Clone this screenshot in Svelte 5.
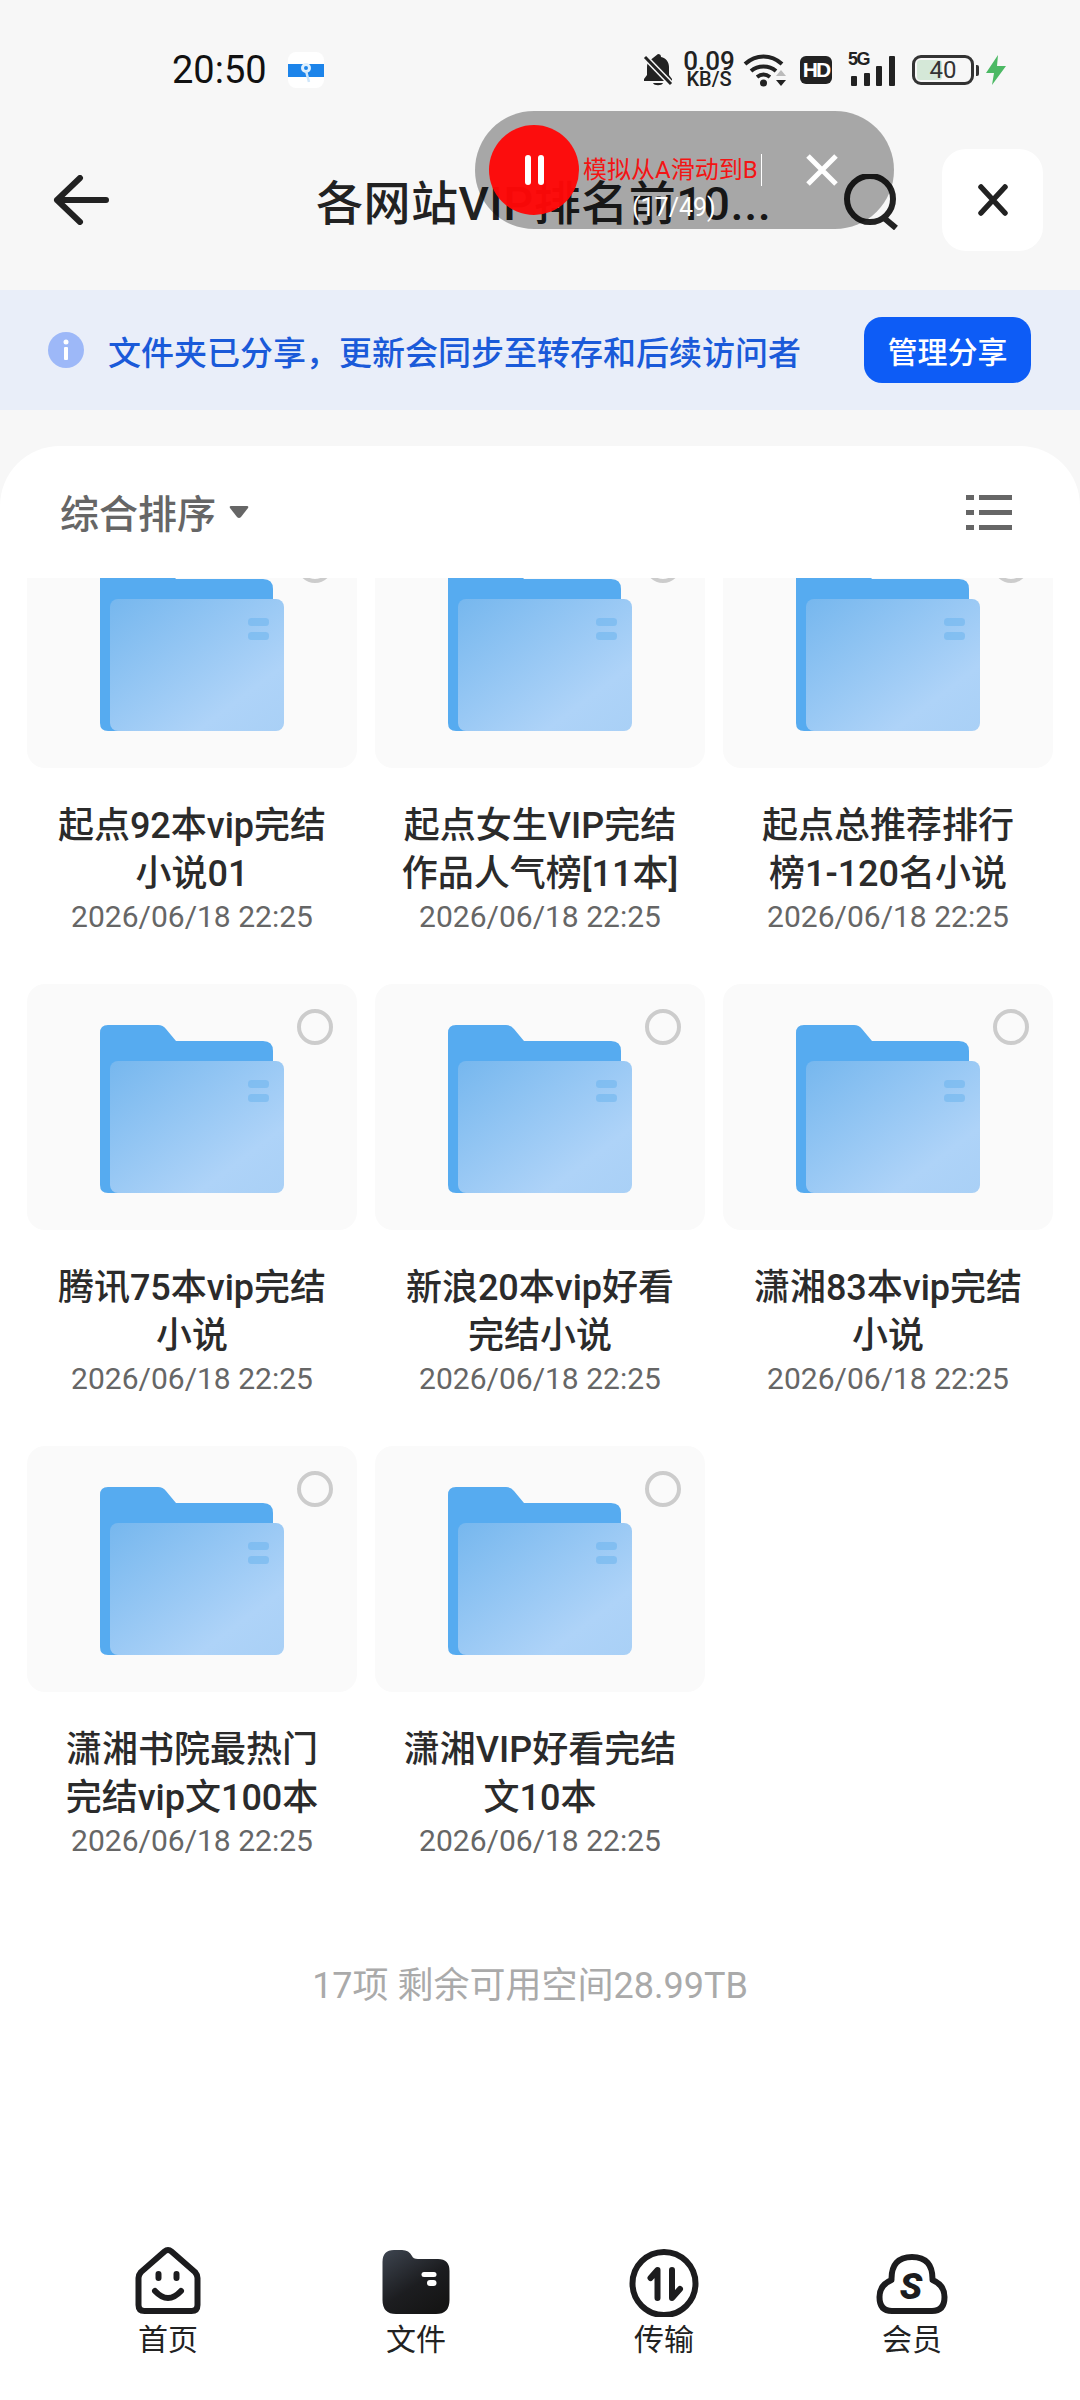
<script>
  const folders = [
    '起点92本vip完结小说01',
    '起点女生VIP完结作品人气榜[11本]',
    '起点总推荐排行榜1-120名小说',
    '腾讯75本vip完结小说',
    '新浪20本vip好看完结小说',
    '潇湘83本vip完结小说',
    '潇湘书院最热门完结vip文100本',
    '潇湘VIP好看完结文10本'
  ];
</script>

<div class="screen">
  <div class="status">
    <span class="time">20:50</span>
    <span class="app-icon">
      <i></i>
      <svg width="12" height="22" viewBox="0 0 12 22" fill="none">
        <circle cx="6" cy="6" r="3.500" stroke="#dfeffc" stroke-width="3" />
        <path d="M6 9l3 11" stroke="#cfe6fa" stroke-width="2.500" />
      </svg>
    </span>
    <div class="status-right">
      <svg class="bell" width="32" height="34" viewBox="0 0 32 34">
        <path d="M16 1c2 0 3 1 3 3 5 1 8 5 8 10v8l3 4v2H2v-2l3-4v-8c0-2 .5-4 1.500-5.500" fill="#222" />
        <path d="M11 30h10c-1 3-9 3-10 0z" fill="#222" />
        <path d="M3 4l26 27" stroke="#f7f7f7" stroke-width="6" />
        <path d="M3 4l26 27" stroke="#222" stroke-width="3" />
      </svg>
      <div class="speed"><b>0.09</b><b class="unit">KB/S</b></div>
      <svg class="wifi" width="46" height="34" viewBox="0 0 46 34" fill="none">
        <path d="M2 11c11-10 26-10 37 0M8 18c7-6 18-6 25 0M14 24c4-3 9-3 13 0" stroke="#222" stroke-width="4" />
        <circle cx="20.500" cy="30" r="3.500" fill="#222" />
        <path d="M33 23l5-6 5 6z" fill="#bbb" />
        <path d="M33 27l5 6 5-6z" fill="#222" />
      </svg>
      <span class="hd">HD</span>
      <div class="signal">
        <span class="five-g">5G</span>
        <i class="b1"></i><i class="b2"></i><i class="b3"></i><i class="b4"></i>
      </div>
      <div class="battery"><i></i><span>40</span></div>
      <span class="nub"></span>
      <svg class="bolt" width="20" height="30" viewBox="0 0 20 30">
        <path d="M12 0L0 18h8l-2 12L20 11h-9z" fill="#4cb964" />
      </svg>
    </div>
  </div>

  <header>
    <svg class="back" width="56" height="50" viewBox="0 0 56 50" fill="none" stroke="#222" stroke-width="6" stroke-linecap="round" stroke-linejoin="round">
      <path d="M27 3L4 25l23 22M4 25h49" />
    </svg>
    <h1>各网站VIP排名前10...</h1>
    <svg class="search" width="56" height="56" viewBox="0 0 56 56" fill="none" stroke="#222" stroke-width="6">
      <circle cx="27" cy="25" r="23" />
      <path d="M41 44l12 10" />
    </svg>
    <button class="close" aria-label="关闭">
      <svg width="32" height="32" viewBox="0 0 32 32" stroke="#222" stroke-width="5.500" stroke-linecap="round">
        <path d="M4 3l24 26M28 3L4 29" />
      </svg>
    </button>
  </header>

  <div class="banner">
    <svg width="36" height="36" viewBox="0 0 36 36">
      <circle cx="18" cy="18" r="18" fill="#9db8f8" />
      <circle cx="18" cy="10" r="2.500" fill="#fff" />
      <rect x="16" y="15" width="4" height="13" rx="1" fill="#fff" />
    </svg>
    <p>文件夹已分享，更新会同步至转存和后续访问者</p>
    <button class="manage">管理分享</button>
  </div>

  <main class="sheet">
    <div class="sort-row">
      <span class="sort">综合排序</span>
      <svg class="caret" width="20" height="16" viewBox="0 0 20 16"><path d="M2 2h16q2 0 1 2l-7 9q-2 2-4 0L1 4Q0 2 2 2z" fill="#666" /></svg>
      <svg class="list-icon" width="46" height="36" viewBox="0 0 46 36" fill="#666">
        <rect x="0" y="1" width="8" height="5" /><rect x="13" y="1" width="33" height="5" />
        <rect x="0" y="16" width="8" height="5" /><rect x="13" y="16" width="33" height="5" />
        <rect x="0" y="31" width="8" height="5" /><rect x="13" y="31" width="33" height="5" />
      </svg>
    </div>

    <div class="scroller">
      <div class="grid">
        {#each folders as name, i}
          <article>
            <div class="thumb">
              <svg width="184" height="168" viewBox="0 0 184 168">
                <defs>
                  <linearGradient id="front{i}" x1="0" y1="0" x2="1" y2="1">
                    <stop offset="0" stop-color="#76b7ee" />
                    <stop offset="0.75" stop-color="#aed3f8" />
                    <stop offset="1" stop-color="#a9d0f6" />
                  </linearGradient>
                </defs>
                <path d="M0 8q0-8 8-8h50q5 0 8 4l10 12h87q10 0 10 10v134q0 8-8 8H8q-8 0-8-8z" fill="#56abf0" />
                <rect x="10" y="36" width="174" height="132" rx="8" fill="url(#front{i})" />
                <rect x="148" y="55" width="21" height="8" rx="3.500" fill="#6fb5ee" opacity=".6" />
                <rect x="148" y="69" width="21" height="8" rx="3.500" fill="#6fb5ee" opacity=".6" />
              </svg>
              <span class="radio"></span>
            </div>
            <h2>{name}</h2>
            <time>2026/06/18 22:25</time>
          </article>
        {/each}
      </div>
      <p class="summary">17项 剩余可用空间28.99TB</p>
    </div>
  </main>

  <nav>
    <div class="tab">
      <svg width="76" height="72" viewBox="0 0 76 72" fill="none" stroke="#1c1c1e" stroke-width="6" stroke-linecap="round">
        <path d="M34.500 6.500Q38 3.500 41.500 6.500L65 27Q67.500 30 67.500 33V60Q67.500 66 61.500 66H14.500Q8.500 66 8.500 60V33Q8.500 30 11 27Z" />
        <path d="M28.500 29v4M46.500 29v4" />
        <path d="M25 46Q38 60 51 46" />
      </svg>
      <span>首页</span>
    </div>
    <div class="tab">
      <svg width="76" height="72" viewBox="0 0 76 72">
        <defs>
          <linearGradient id="filesFill" x1="0" y1="0" x2="0.700" y2="1">
            <stop offset="0" stop-color="#3e4550" />
            <stop offset="0.600" stop-color="#1c1d20" />
            <stop offset="1" stop-color="#151515" />
          </linearGradient>
        </defs>
        <path d="M4.500 17Q4.500 5 16 5H24Q31 5 34 11Q35 14 40 14H60Q71.500 14 71.500 26V55Q71.500 69 58 69H18Q4.500 69 4.500 55Z" fill="url(#filesFill)" />
        <rect x="43.500" y="27" width="15" height="5" rx="2.500" fill="#fff" />
        <rect x="49" y="35" width="9.500" height="6" rx="3" fill="#fff" />
      </svg>
      <span>文件</span>
    </div>
    <div class="tab">
      <svg width="76" height="72" viewBox="0 0 76 72" fill="none" stroke="#1c1c1e" stroke-width="6" stroke-linecap="round" stroke-linejoin="round">
        <circle cx="38" cy="38.500" r="31.500" />
        <path d="M31.500 53V25L24.500 33" />
        <path d="M46 25V53L54 44" />
      </svg>
      <span>传输</span>
    </div>
    <div class="tab">
      <svg width="76" height="72" viewBox="0 0 76 72" fill="none" stroke="#1c1c1e" stroke-width="6" stroke-linejoin="round">
        <path d="M18 66H58Q70.500 66 70.500 52Q70.500 40 58.500 35Q59 12 38 12Q17 12 17.500 35Q5.500 40 5.500 52Q5.500 66 18 66Z" />
        <text x="37" y="54" text-anchor="middle" class="cloud-s">S</text>
      </svg>
      <span>会员</span>
    </div>
  </nav>

  <!-- floating auto-click control, sits on top of the app -->
  <div class="pill">
    <div class="pause"><i></i><i></i></div>
    <span class="step">模拟从A滑动到B</span>
    <svg class="pill-x" width="32" height="32" viewBox="0 0 32 32" stroke="#fff" stroke-width="5">
      <path d="M2 2l28 28M30 2L2 30" />
    </svg>
    <span class="count">(17/49)</span>
  </div>
</div>

<style>
  :global(body) { background: #fff; }
  .screen { position: relative; display: flex; flex-direction: column; height: 2400px; overflow: hidden; background: #f7f7f7; color: #222; font-family: Roboto, "Noto Sans CJK SC", sans-serif; }

  .status { display: flex; align-items: center; height: 80px; margin-top: 30px; padding: 0 74px 0 172px; }
  .time { font-family: Roboto, sans-serif; font-size: 38px; color: #111; line-height: 1; }
  .app-icon { position: relative; display: flex; align-items: center; justify-content: center; width: 36px; height: 36px; margin-left: 21px; border-radius: 8px; background: #fff; }
  .app-icon i { position: absolute; left: 0; right: 0; top: 12px; height: 13px; background: #1c84ea; }
  .app-icon svg { position: relative; margin-top: 6px; }
  .status-right { display: flex; align-items: center; margin-left: auto; }
  .speed { display: flex; flex-direction: column; align-items: center; width: 52px; margin-left: 9px; font-family: Roboto, sans-serif; line-height: 18px; }
  .speed b { font-size: 26px; font-weight: 500; color: #222; }
  .speed .unit { font-size: 20px; }
  .wifi { margin-left: 8px; }
  .hd { display: flex; align-items: center; justify-content: center; width: 32px; height: 28px; margin-left: 11px; border-radius: 6px; background: #222; color: #fff; font-family: "Liberation Sans", sans-serif; font-size: 21px; font-weight: 700; letter-spacing: -2px; }
  .signal { position: relative; display: flex; align-items: flex-end; gap: 6.5px; width: 44px; height: 32px; margin-left: 19px; }
  .signal i { display: block; width: 6px; background: #222; border-radius: 1px; }
  .signal .b1 { height: 10px; }
  .signal .b2 { height: 13px; }
  .signal .b3 { height: 20px; }
  .signal .b4 { height: 30px; }
  .five-g { position: absolute; left: -3px; top: -4px; font-family: "Liberation Sans", sans-serif; font-size: 18px; font-weight: 700; letter-spacing: -1.5px; line-height: 1; color: #222; }
  .battery { position: relative; width: 62px; height: 30px; margin-left: 17px; box-sizing: border-box; border: 3px solid #333; border-radius: 9px; overflow: hidden; }
  .battery i { position: absolute; left: 2px; top: 2px; bottom: 2px; width: 25px; background: #d5e8d8; border-radius: 3px; }
  .battery span { position: relative; display: block; text-align: center; font-family: Roboto, sans-serif; font-size: 24px; line-height: 24px; color: #333; }
  .nub { width: 3px; height: 11px; margin-left: 2px; background: #333; border-radius: 0 2px 2px 0; }
  .bolt { margin-left: 7px; }

  header { display: flex; align-items: center; height: 180px; padding: 0 37px 0 53px; box-sizing: border-box; }
  h1 { margin: -2px 0 0 207px; font-size: 47px; font-weight: 500; letter-spacing: .5px; color: #222; white-space: nowrap; }
  .search { margin-left: auto; margin-top: 3px; }
  .close { display: flex; align-items: center; justify-content: center; width: 101px; height: 102px; margin-left: 43px; padding: 0; border: 0; border-radius: 24px; background: #fff; }

  .banner { display: flex; align-items: center; height: 120px; padding: 0 49px 0 48px; background: #e9eef9; }
  .banner p { margin: 2px 0 0 24px; font-size: 33px; font-weight: 500; color: #1a5ad9; white-space: nowrap; }
  .manage { width: 167px; height: 66px; margin-left: auto; padding: 0; border: 0; border-radius: 18px; background: #0d5cf6; color: #fff; font-family: inherit; font-size: 30px; font-weight: 500; }

  .sheet { flex: 1; min-height: 0; display: flex; flex-direction: column; margin-top: 36px; border-radius: 60px 60px 0 0; background: #fff; overflow: hidden; }
  .sort-row { flex: none; display: flex; align-items: center; height: 132px; padding: 0 68px 0 60px; box-sizing: border-box; }
  .sort { margin-top: -3px; font-size: 39px; font-weight: 500; color: #666; }
  .caret { margin-left: 13px; }
  .list-icon { margin-left: auto; }

  .scroller { flex: 1; min-height: 0; overflow: hidden; }
  .grid { display: grid; grid-template-columns: repeat(3, 330px); gap: 45px 18px; margin-top: -56px; padding: 0 27px; }
  article { display: flex; flex-direction: column; align-items: center; }
  .thumb { position: relative; display: flex; align-items: flex-start; justify-content: center; width: 100%; height: 246px; padding-top: 41px; box-sizing: border-box; border-radius: 18px; background: #fafafa; }
  .radio { position: absolute; right: 24px; top: 25px; width: 36px; height: 36px; box-sizing: border-box; border: 4px solid #ccc; border-radius: 50%; }
  h2 { width: 280px; height: 93px; margin: 34px 0 0; font-size: 36px; font-weight: 500; line-height: 48px; text-align: center; color: #2b2b2b; }
  time { font-family: Roboto, sans-serif; font-size: 30px; line-height: 44px; color: #666; }
  .summary { margin: 100px 20px 0 0; font-size: 36px; line-height: 46px; text-align: center; color: #aaa; }

  nav { flex: none; display: grid; grid-template-columns: repeat(4, 248px); height: 160px; padding: 5px 0 0 44px; box-sizing: border-box; background: #fff; }
  .tab { display: flex; flex-direction: column; align-items: center; }
  .tab span { font-size: 30px; line-height: 36px; margin-top: 5px; color: #222; }
  .cloud-s { font-family: Roboto, sans-serif; font-size: 37px; font-weight: 900; font-style: italic; fill: #1c1c1e; stroke: none; }

  .pill { position: absolute; left: 475px; top: 111px; display: flex; align-items: center; width: 419px; height: 118px; border-radius: 59px; background: rgba(0, 0, 0, .32); }
  .pause { display: flex; align-items: center; justify-content: center; gap: 7px; width: 90px; height: 90px; margin-left: 14px; border-radius: 50%; background: rgba(255, 8, 8, .97); }
  .pause i { display: block; width: 6px; height: 30px; border-radius: 3px; background: #fff; }
  .step { margin-left: 4px; padding-right: 3px; border-right: 1px solid #fff; font-size: 24px; line-height: 32px; color: #f41414; white-space: nowrap; }
  .pill-x { margin-left: 44px; }
  .count { position: absolute; left: 157px; top: 82px; font-family: Roboto, sans-serif; font-size: 25px; line-height: 30px; color: #fff; white-space: nowrap; }
</style>
